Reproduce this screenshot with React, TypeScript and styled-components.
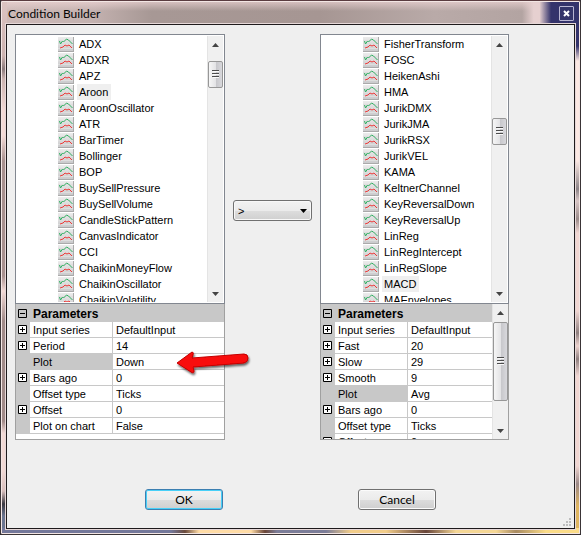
import React from "react";
import styled, { createGlobalStyle, css } from "styled-components";

const Global = createGlobalStyle`
  *, *::before, *::after { box-sizing: border-box; }
  body { margin: 0; background: #2b2b33; font: 11px/16px "Liberation Sans", Arial, sans-serif; color: #000; }
`;

const Frame = styled.div`
  display: flex;
  flex-direction: column;
  height: 100vh;
  min-height: 400px;
  border: 1px solid #3a3436;
  border-top-color: #5a3c40;
  border-radius: 2px;
  overflow: hidden;
  box-shadow: inset 0 0 0 1px #f3e6e4;
  padding: 0 5px 5px;
  background:
    linear-gradient(90deg, #74789a 0 170px, #6a4a3c 184px, #ffdca6 198px 250px, #6a4638 264px, #7c7d98 276px 325px, #f2cd8a 350px 385px, #68453a 425px, #f5d795 455px 495px, #a98b62 515px, #fbdc88 545px) left bottom / 100% 6px no-repeat,
    linear-gradient(180deg, #dcc4c2 0, #cdb3b0 55px, #8b7b7c 68px, #cbb3b0 78px, #f3dad6 110px 135px, #a8918f 160px, #a8918f 275px, #f3dad6 290px, #a08a88 320px, #a08a88 420px, #f0d8d4 432px 470px, #d8bfbd 490px, #3a3840 503px, #6b7590 515px) left top / 6px 100% no-repeat,
    linear-gradient(180deg, #34336b 0 45px, #fbe8e3 60px 160px, #8c8488 188px, #d8c6c6 200px, #9b8c8b 218px, #f0d6d2 232px 310px, #8f8080 332px, #ecd2ce 345px, #8f8080 358px, #f0d6d2 375px 465px, #9b8988 483px, #dfb560 505px) right top / 6px 100% no-repeat,
    linear-gradient(90deg, transparent 90%, #e6d0d0 92% 93%, #34336b 95%) top / 100% 25px no-repeat,
    linear-gradient(180deg, rgba(240, 215, 215, 0.7) 0, transparent 10px) top / 100% 25px no-repeat,
    linear-gradient(90deg, #cdbab8 0, #c3b1af 16%, #a79895 26%, #a69693 55%, #b9aaa8 75%, #b3a4a2 90%) top / 100% 25px no-repeat;
`;

const TitleBar = styled.header`
  display: flex;
  align-items: center;
  justify-content: space-between;
  flex: 0 0 23px;
  padding: 2px 1px 0 2px;
`;

const Title = styled.h1`
  margin: 0;
  font: 12px/16px Lato, "Segoe UI", sans-serif;
  color: #050505;
`;

const CloseButton = styled.button`
  display: grid;
  place-items: center;
  width: 15px;
  height: 15px;
  padding: 0;
  border: 1px solid #b9b6d2;
  border-radius: 1px;
  background: #35356a;
`;

const Client = styled.main`
  flex: 1;
  min-height: 0;
  display: flex;
  flex-direction: column;
  border: 1px solid #1e1a1c;
  box-shadow: 0 0 0 1px #e6d8d8;
  background: #efefef;
`;

const Columns = styled.div`
  flex: 1;
  min-height: 0;
  display: grid;
  grid-template-columns: minmax(0, 210fr) 79px minmax(0, 189fr);
  column-gap: 8px;
  padding: 9px 65px 0 8px;
`;

const Column = styled.section`
  display: flex;
  flex-direction: column;
  min-height: 0;
`;

const TreePane = styled.div`
  flex: 1;
  min-height: 0;
  display: flex;
  padding: 1px;
  border: 1px solid #828790;
  background: #fff;
`;

const Tree = styled.ul`
  flex: 1;
  margin: 0;
  padding: 0 0 0 41px;
  list-style: none;
  overflow: hidden;
`;

const TreeItem = styled.li`
  display: flex;
  align-items: center;
  gap: 3px;
  height: 16px;
`;

const TreeLabel = styled.span<{ $selected: boolean }>`
  padding: 0 3px 0 2px;
  white-space: nowrap;
  background: ${(p) => (p.$selected ? "#efefef" : "transparent")};
`;

const ScrollTrack = styled.div`
  flex: 0 0 16px;
  display: flex;
  flex-direction: column;
  align-items: center;
  border-left: 1px solid #e4e4e4;
  background: #f0f0f0;
`;

const ScrollArrow = styled.button`
  display: grid;
  place-items: center;
  flex: 0 0 17px;
  width: 100%;
  padding: 0;
  border: 0;
  background: none;
`;

const Spacer = styled.div<{ $grow: number }>`
  flex: ${(p) => p.$grow} 1 0;
`;

const Thumb = styled.div<{ $fill?: boolean }>`
  display: grid;
  place-items: center;
  flex: ${(p) => (p.$fill ? "78 1 0" : "0 0 27px")};
  width: 15px;
  border: 1px solid #979797;
  border-radius: 2px;
  background: linear-gradient(90deg, #f6f6f6, #e4e4e6 50%, #c6c6ca 51%, #d8d8dc);
`;

const Combo = styled.select`
  align-self: start;
  margin-top: 166px;
  width: 100%;
  height: 21px;
  padding: 0 4px;
  appearance: none;
  border: 1px solid #707070;
  border-radius: 3px;
  box-shadow: inset 0 0 0 1px #f8f8f8;
  font: inherit;
  color: #000;
  background:
    url("data:image/svg+xml,%3Csvg xmlns='http://www.w3.org/2000/svg' width='7' height='4'%3E%3Cpath d='M0 0h7L3.5 4z'/%3E%3C/svg%3E") right 4px center no-repeat,
    linear-gradient(#f2f2f2, #ebebeb 50%, #dddddd 51%, #cfcfcf);
`;

const GridPane = styled.div`
  height: 136px;
  display: flex;
  border: 1px solid #a0a0a0;
  border-top: 0;
  background: #fff;
  overflow: hidden;
`;

const TableBox = styled.div`
  flex: 1;
  min-width: 0;
  overflow: hidden;
`;

const PropTable = styled.table`
  width: 100%;
  border-collapse: separate;
  border-spacing: 0;
  table-layout: fixed;
`;

const cell = css`
  height: 16px;
  padding: 2px 3px 0;
  line-height: 13px;
  text-align: left;
  font-weight: normal;
  white-space: nowrap;
  border-bottom: 1px solid #c8c8c8;
`;

const Gutter = styled.td`
  ${cell}
  padding: 0;
  background: #c8c8c8;
`;

const NameCell = styled.th<{ $active?: boolean }>`
  ${cell}
  border-right: 1px solid #c8c8c8;
  background: ${(p) => (p.$active ? "#c8c8c8" : "#fff")};
`;

const ValueCell = styled.td`
  ${cell}
`;

const HeadCell = styled.th`
  ${cell}
  height: 18px;
  padding-top: 3px;
  font-weight: bold;
  font-size: 12px;
  background: #c8c8c8;
`;

const HeadGutter = styled(Gutter)`
  height: 18px;
  padding-top: 2px;
`;

const Expander = styled.button`
  display: block;
  width: 9px;
  height: 9px;
  margin: 0 0 0 2px;
  padding: 0;
  border: 0;
  background: none;
  line-height: 0;
`;

const Footer = styled.footer`
  flex: 0 0 88px;
  display: flex;
  justify-content: center;
  align-items: flex-end;
  gap: 135px;
  padding-bottom: 18px;
  position: relative;
`;

const PushButton = styled.button<{ $primary?: boolean }>`
  width: 78px;
  height: 21px;
  padding: 0;
  border: 1px solid ${(p) => (p.$primary ? "#3c7fb1" : "#707070")};
  border-radius: 3px;
  box-shadow: inset 0 0 0 1px ${(p) => (p.$primary ? "#48d0f8" : "#fbfbfb")};
  background: linear-gradient(#f2f2f2, #ebebeb 50%, #dddddd 51%, #cfcfcf);
  font: 12px/16px Lato, "Segoe UI", sans-serif;
  color: #000;
`;

const Grip = styled.svg`
  position: absolute;
  right: 3px;
  bottom: 2px;
`;

const Arrow = styled.svg`
  position: absolute;
  left: 100%;
  top: 43px;
  margin-left: -51px;
  pointer-events: none;
`;

const ArrowAnchor = styled.div`
  position: relative;
`;

const ChartIcon = () => (
  <svg width="16" height="15" viewBox="0 0 16 15" aria-hidden="true">
    <defs>
      <linearGradient id="tile" x2="0" y2="1">
        <stop offset="0" stopColor="#ececec" />
        <stop offset="1" stopColor="#c8c8ca" />
      </linearGradient>
    </defs>
    <path d="M0 0h16v15H0z" fill="url(#tile)" />
    <path d="M0 3.5h16M0 7.5h16M0 11.5h16" stroke="#dedede" />
    <path d="M15.5 0v15M0 14.5h16" stroke="#aaa" />
    <path d="M1.5 4l1 3 2-3 1 1 3-3 2 1 2 2 2 2" fill="none" stroke="#2fae60" />
    <path d="M2 11l3-1 2-2 2 1 2-1 2 2 1 1" fill="none" stroke="#ee3a3a" />
  </svg>
);

const Triangle = ({ down }: { down?: boolean }) => (
  <svg width="7" height="4" viewBox="0 0 7 4" aria-hidden="true">
    <path d={down ? "M0 0h7L3.5 4z" : "M0 4h7L3.5 0z"} fill="#444" />
  </svg>
);

const GripLines = () => (
  <svg width="7" height="9" viewBox="0 0 7 9" aria-hidden="true">
    <path d="M0 .5h7M0 3.5h7M0 6.5h7" stroke="#4c4c4c" />
    <path d="M1 1.5h6M1 4.5h6M1 7.5h6" stroke="#fafafa" />
  </svg>
);

const Scrollbar = ({ before, after, fill }: { before: number; after: number; fill?: boolean }) => (
  <ScrollTrack>
    <ScrollArrow aria-label="Scroll up"><Triangle /></ScrollArrow>
    <Spacer $grow={before} />
    <Thumb $fill={fill}><GripLines /></Thumb>
    <Spacer $grow={after} />
    <ScrollArrow aria-label="Scroll down"><Triangle down /></ScrollArrow>
  </ScrollTrack>
);

type TreeProps = { label: string; items: string[]; selected: string; before: number; after: number };

const IndicatorTree = ({ label, items, selected, before, after }: TreeProps) => (
  <TreePane>
    <Tree aria-label={label}>
      {items.map((name) => (
        <TreeItem key={name}>
          <ChartIcon />
          <TreeLabel $selected={name === selected}>{name}</TreeLabel>
        </TreeItem>
      ))}
    </Tree>
    <Scrollbar before={before} after={after} />
  </TreePane>
);

type Row = { name: string; value: string; expandable?: boolean };

const ExpandBox = ({ open, label }: { open?: boolean; label: string }) => (
  <Expander aria-label={label}>
    <svg width="9" height="9" viewBox="0 0 9 9">
      <path d="M.5 .5h8v8h-8z" fill={open ? "#c8c8c8" : "#fff"} stroke="#000" />
      <path d={open ? "M2 4.5h5" : "M2 4.5h5M4.5 2v5"} stroke="#000" />
    </svg>
  </Expander>
);

const Properties = ({ rows, nameWidth, scroll }: { rows: Row[]; nameWidth: number; scroll?: boolean }) => (
  <GridPane>
    <TableBox>
      <PropTable>
        <colgroup>
          <col width={14} />
          <col width={nameWidth} />
          <col />
        </colgroup>
        <thead>
          <tr>
            <HeadGutter as="td"><ExpandBox open label="Collapse Parameters" /></HeadGutter>
            <HeadCell colSpan={2}>Parameters</HeadCell>
          </tr>
        </thead>
        <tbody>
          {rows.map((r) => (
            <tr key={r.name}>
              <Gutter>{r.expandable && <ExpandBox label={`Expand ${r.name}`} />}</Gutter>
              <NameCell scope="row" $active={r.name === "Plot"}>{r.name}</NameCell>
              <ValueCell>{r.value}</ValueCell>
            </tr>
          ))}
        </tbody>
      </PropTable>
    </TableBox>
    {scroll && <Scrollbar before={1} after={21} fill />}
  </GridPane>
);

const leftItems = ["ADX", "ADXR", "APZ", "Aroon", "AroonOscillator", "ATR", "BarTimer", "Bollinger", "BOP", "BuySellPressure", "BuySellVolume", "CandleStickPattern", "CanvasIndicator", "CCI", "ChaikinMoneyFlow", "ChaikinOscillator", "ChaikinVolatility"];
const rightItems = ["FisherTransform", "FOSC", "HeikenAshi", "HMA", "JurikDMX", "JurikJMA", "JurikRSX", "JurikVEL", "KAMA", "KeltnerChannel", "KeyReversalDown", "KeyReversalUp", "LinReg", "LinRegIntercept", "LinRegSlope", "MACD", "MAEnvelopes"];

const leftRows: Row[] = [
  { name: "Input series", value: "DefaultInput", expandable: true },
  { name: "Period", value: "14", expandable: true },
  { name: "Plot", value: "Down" },
  { name: "Bars ago", value: "0", expandable: true },
  { name: "Offset type", value: "Ticks" },
  { name: "Offset", value: "0", expandable: true },
  { name: "Plot on chart", value: "False" },
];

const rightRows: Row[] = [
  { name: "Input series", value: "DefaultInput", expandable: true },
  { name: "Fast", value: "20", expandable: true },
  { name: "Slow", value: "29", expandable: true },
  { name: "Smooth", value: "9", expandable: true },
  { name: "Plot", value: "Avg" },
  { name: "Bars ago", value: "0", expandable: true },
  { name: "Offset type", value: "Ticks" },
  { name: "Offset", value: "0", expandable: true },
];

export default function App() {
  return (
    <>
      <Global />
      <Frame>
        <TitleBar>
          <Title>Condition Builder</Title>
          <CloseButton aria-label="Close">
            <svg width="9" height="9" viewBox="0 0 9 9">
              <path d="M2 2l5 5M7 2L2 7" stroke="#fff" strokeWidth="2" />
            </svg>
          </CloseButton>
        </TitleBar>
        <Client>
          <Columns>
            <Column>
              <IndicatorTree label="Left indicator" items={leftItems} selected="Aroon" before={8} after={189} />
              <ArrowAnchor>
                <Properties rows={leftRows} nameWidth={83} />
                <Arrow width="80" height="34" viewBox="0 0 80 34" aria-hidden="true">
                  <defs>
                    <filter id="shade" x="-10%" y="-20%" width="130%" height="160%">
                      <feDropShadow dx="1" dy="2" stdDeviation="1.2" floodOpacity="0.6" />
                    </filter>
                  </defs>
                  <path d="M3 16L18 5q2 0 1 3l-1 3L70 7q4 0 4 4t-4 5L19 20l1 4q0 3-3 1z" fill="#f80c0c" stroke="#c40000" filter="url(#shade)" />
                </Arrow>
              </ArrowAnchor>
            </Column>
            <Combo aria-label="Comparison" defaultValue=">">
              <option>&gt;</option>
              <option>&lt;</option>
              <option>=</option>
            </Combo>
            <Column>
              <IndicatorTree label="Right indicator" items={rightItems} selected="MACD" before={62} after={135} />
              <Properties rows={rightRows} nameWidth={73} scroll />
            </Column>
          </Columns>
          <Footer>
            <PushButton $primary>OK</PushButton>
            <PushButton>Cancel</PushButton>
            <Grip width="8" height="8" viewBox="0 0 8 8" aria-hidden="true">
              <path d="M6 0h2v2H6zM3 3h2v2H3zM6 3h2v2H6zM0 6h2v2H0zM3 6h2v2H3zM6 6h2v2H6z" fill="#bdbdbd" />
            </Grip>
          </Footer>
        </Client>
      </Frame>
    </>
  );
}
